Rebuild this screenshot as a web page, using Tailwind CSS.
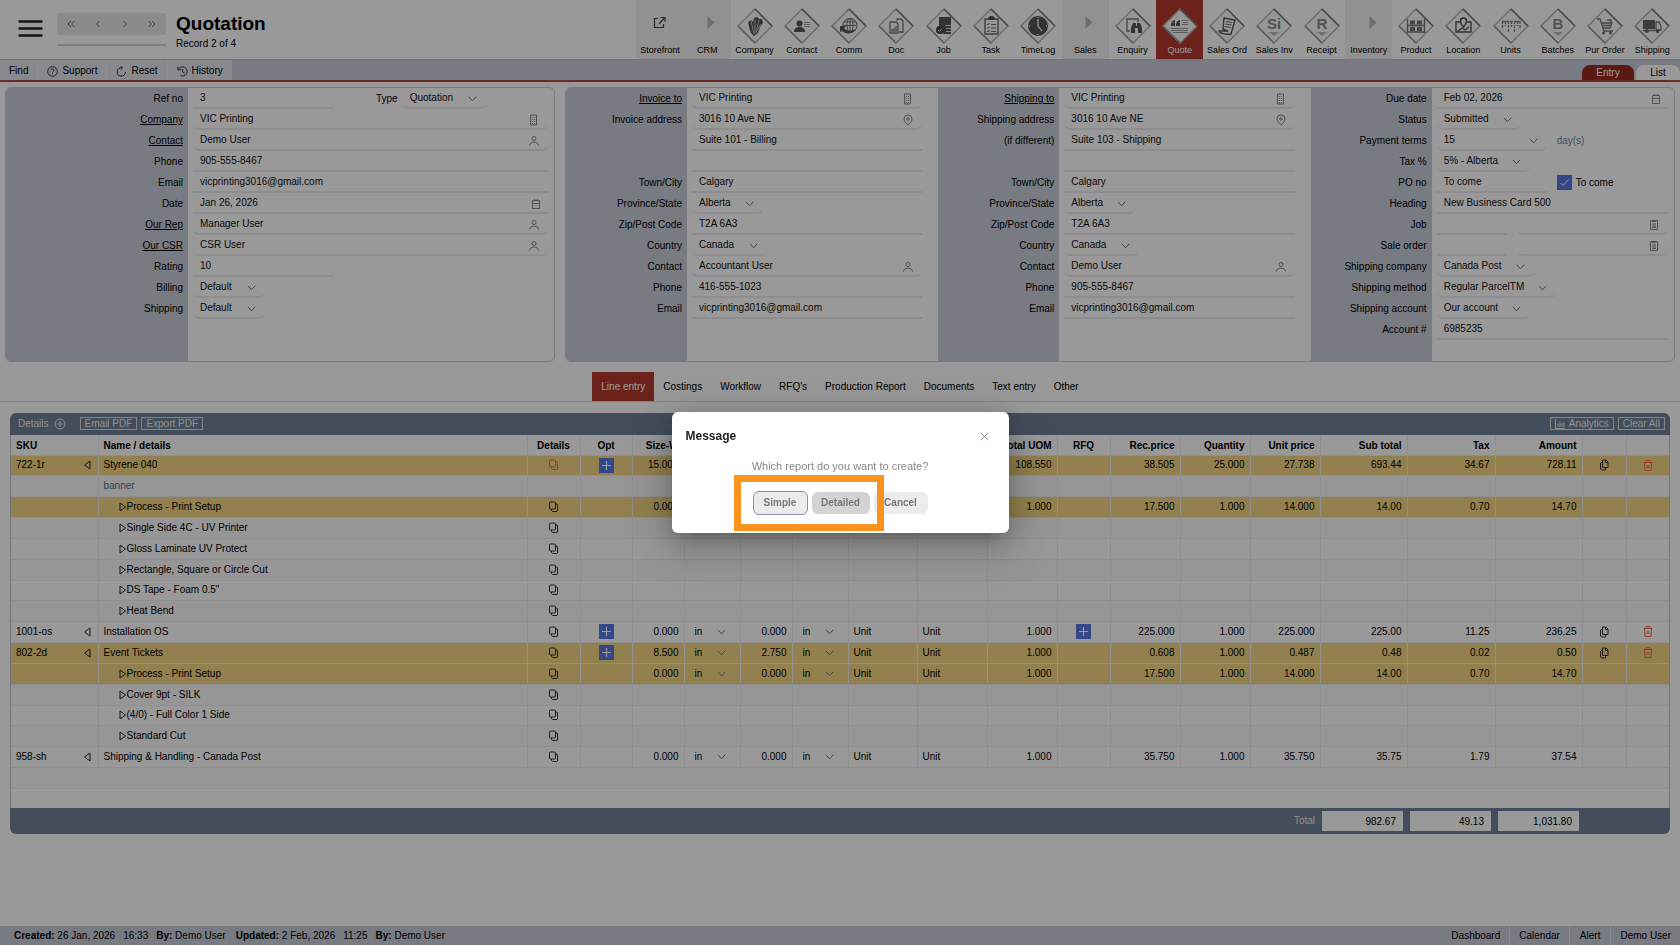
<!DOCTYPE html>
<html lang="en">
<head>
    <meta charset="UTF-8">
    <meta name="viewport" content="width=device-width, initial-scale=1.0">
    <title>Quotation</title>
    <script src="https://cdn.jsdelivr.net/npm/@tailwindcss/browser@4"></script>
</head>
<body class="min-h-screen flex flex-col bg-white text-[10px] leading-3 text-black font-['Liberation_Sans',Arial,sans-serif]">

    <!-- Header -->
    <header class="flex h-[60px] border-b border-[#c4c4c4]">
        <button aria-label="Menu" class="ml-[18px] mt-4 self-start">
            <svg width="25" height="25" viewBox="0 0 25 25" stroke="#222" stroke-width="2.4" stroke-linecap="round"><path d="M1.5 5.5h22M1.5 12.5h22M1.5 19.5h22"/></svg>
        </button>
        <div class="ml-3.5 mt-[13px] w-[109px]">
            <div class="flex h-[22px] items-center justify-around rounded bg-[#e6e6e6] text-[#666]">
                <button aria-label="First"><svg width="8" height="8" viewBox="0 0 8 8" fill="none" stroke="currentColor"><path d="M4 1L1 4l3 3M7.5 1l-3 3 3 3"/></svg></button>
                <button aria-label="Previous"><svg width="8" height="8" viewBox="0 0 8 8" fill="none" stroke="currentColor"><path d="M5.5 1l-3 3 3 3"/></svg></button>
                <button aria-label="Next"><svg width="8" height="8" viewBox="0 0 8 8" fill="none" stroke="currentColor"><path d="M2.5 1l3 3-3 3"/></svg></button>
                <button aria-label="Last"><svg width="8" height="8" viewBox="0 0 8 8" fill="none" stroke="currentColor"><path d="M.5 1l3 3-3 3M4 1l3 3-3 3"/></svg></button>
            </div>
            <div class="mt-[9px] h-0.5 bg-[#d0d4df]"></div>
        </div>
        <div class="ml-2.5 mt-3">
            <h1 class="text-[19px] leading-6 font-bold">Quotation</h1>
            <p class="mt-0.5">Record 2 of 4</p>
        </div>
        <nav id="modules" class="ml-auto mr-1 flex w-[62%] pl-0.5 text-[9px]"></nav>
    </header>

    <!-- Toolbar -->
    <div class="flex h-[22px] border-b-2 border-[#b04a3a] bg-[#c8cdd9]">
        <button class="flex items-center border-r border-[#eceef2] bg-[#e2e5ea] px-[9px] pt-0.5">Find</button>
        <button class="flex items-center gap-1 border-r border-[#eceef2] bg-[#e2e5ea] px-[9px] pt-0.5">
            <svg width="11" height="11" viewBox="0 0 11 11" fill="none" stroke="#333"><circle cx="5.5" cy="5.5" r="4.8"/><path d="M4 4.4c0-2 3-2 3 0 0 1-1.500 1-1.500 2.200M5.500 7.500v1"/></svg>
            Support
        </button>
        <button class="flex items-center gap-1 border-r border-[#eceef2] bg-[#e2e5ea] px-[9px] pt-0.5">
            <svg width="11" height="11" viewBox="0 0 11 11" fill="none" stroke="#333"><path d="M9.500 6a4.200 4.200 0 1 1-3.500-4.200M4.500.3L6.500 2 4.600 3.800"/></svg>
            Reset
        </button>
        <button class="flex items-center gap-1 bg-[#e2e5ea] px-[9px] pt-0.5">
            <svg width="11" height="11" viewBox="0 0 11 11" fill="none" stroke="#333"><path d="M1.500 3.200a4.600 4.600 0 1 1 1.800 6.200M.8.800v3h3M5.700 3v3l2 1.200"/></svg>
            History
        </button>
        <div class="ml-auto flex items-end gap-0.5">
            <button class="h-[15px] w-[52px] rounded-t-lg bg-[#9a2a1d] text-white">Entry</button>
            <button class="h-[15px] w-11 rounded-t-lg bg-white">List</button>
        </div>
    </div>

    <main class="grow">
        <!-- Form panels -->
        <form class="flex gap-2.5 px-[5px] pt-[5px]">
            <div class="flex flex-[549_1_0%] overflow-hidden rounded-md border border-[#c8cdd9]" data-section="customer" data-wide></div>
            <div class="flex flex-[1110_1_0%] overflow-hidden rounded-md border border-[#c8cdd9]">
                <div class="flex flex-[373_1_0%]" data-section="invoice"></div>
                <div class="flex flex-[373_1_0%]" data-section="shipping"></div>
                <div class="flex flex-[364_1_0%]" data-section="terms" data-last></div>
            </div>
        </form>

        <!-- Tabs -->
        <nav class="mt-2.5 flex h-[30px] justify-center border-b border-[#dcdcdc]">
            <a href="#" class="flex items-center bg-[#b43a2d] px-[9px] text-white">Line entry</a>
            <a href="#" class="flex items-center px-[9px]">Costings</a>
            <a href="#" class="flex items-center px-[9px]">Workflow</a>
            <a href="#" class="flex items-center px-[9px]">RFQ's</a>
            <a href="#" class="flex items-center px-[9px]">Production Report</a>
            <a href="#" class="flex items-center px-[9px]">Documents</a>
            <a href="#" class="flex items-center px-[9px]">Text entry</a>
            <a href="#" class="flex items-center px-[9px]">Other</a>
        </nav>

        <!-- Line items -->
        <section class="mx-2.5 mt-[11px] overflow-hidden rounded-md bg-[#708099]">
            <div class="flex h-[22px] items-center pr-[5px] pb-px pl-2 text-[#eee]">
                <span>Details</span>
                <button aria-label="Add line" class="ml-[5px]"><svg width="12" height="12" viewBox="0 0 12 12" fill="none" stroke="currentColor"><circle cx="6" cy="6" r="5"/><path d="M6 3v6M3 6h6"/></svg></button>
                <button class="ml-3.5 h-[13px] border border-[#ddd] px-1 leading-[11px]">Email PDF</button>
                <button class="ml-1 h-[13px] border border-[#ddd] px-1 leading-[11px]">Export PDF</button>
                <button class="ml-auto flex h-[13px] items-center gap-1 border border-[#ddd] px-1 leading-[11px]">
                    <svg width="10" height="10" viewBox="0 0 10 10" fill="none" stroke="currentColor"><path d="M.5 0v9.500H10M3 8V5M5 8V2.500M7 8V4M9 8V3"/></svg>
                    Analytics
                </button>
                <button class="ml-1 h-[13px] border border-[#ddd] px-1 leading-[11px]">Clear All</button>
            </div>
            <div class="border-x border-[#c4c4c8] bg-white">
                <table class="w-full table-fixed border-collapse">
                    <colgroup>
                        <col class="w-[87px]"><col><col class="w-[53px]"><col class="w-[52px]"><col class="w-[52px]">
                        <col class="w-[56px]"><col class="w-[52px]"><col class="w-[56px]"><col class="w-[69px]"><col class="w-[70px]">
                        <col class="w-[70px]"><col class="w-[53px]"><col class="w-[70px]"><col class="w-[70px]"><col class="w-[70px]">
                        <col class="w-[87px]"><col class="w-[88px]"><col class="w-[87px]"><col class="w-[44px]"><col class="w-[43px]">
                    </colgroup>
                    <thead><tr id="heads" class="h-5"></tr></thead>
                    <tbody id="lines"></tbody>
                </table>
            </div>
            <div class="flex h-[26px] items-center justify-end gap-[7px] pr-[91px] text-[#eee]">
                <span>Total</span>
                <input aria-label="Sub total" readonly value="982.67" class="h-5 w-[81px] bg-white pr-[7px] text-right text-black">
                <input aria-label="Tax total" readonly value="49.13" class="h-5 w-[81px] bg-white pr-[7px] text-right text-black">
                <input aria-label="Amount total" readonly value="1,031.80" class="h-5 w-[81px] bg-white pr-[7px] text-right text-black">
            </div>
        </section>
    </main>

    <!-- Status bar -->
    <footer class="flex h-[19px] items-center bg-[#c8cdd9] pl-3.5">
        <span><b>Created:</b> 26 Jan, 2026</span>
        <span class="ml-2">16:33</span>
        <span class="ml-2"><b>By:</b> Demo User</span>
        <span class="ml-2.5"><b>Updated:</b> 2 Feb, 2026</span>
        <span class="ml-2">11:25</span>
        <span class="ml-2"><b>By:</b> Demo User</span>
        <nav class="ml-auto flex h-full">
            <a href="#" class="flex items-center border-r border-[#e4e7ee] px-[9px]">Dashboard</a>
            <a href="#" class="flex items-center border-r border-[#e4e7ee] px-[9px]">Calendar</a>
            <a href="#" class="flex items-center border-r border-[#e4e7ee] px-2.5">Alert</a>
            <a href="#" class="flex items-center px-[9px]">Demo User</a>
        </nav>
    </footer>

    <!-- Message dialog -->
    <div class="fixed inset-0 flex items-center justify-center bg-black/40">
        <div role="dialog" aria-labelledby="dialogTitle" class="w-[337px] rounded-md bg-white px-3.5 pt-4 pb-[18px] shadow-[0_12px_48px_16px_rgba(0,0,0,0.12),0_9px_28px_rgba(0,0,0,0.2),0_6px_16px_-8px_rgba(0,0,0,0.3)]">
            <div class="flex h-4 items-center justify-between">
                <h2 id="dialogTitle" class="text-xs font-bold text-[#222]">Message</h2>
                <button aria-label="Close" class="mr-1.5"><svg width="9" height="9" viewBox="0 0 9 9" stroke="#888"><path d="M.8.8l7.400 7.400M8.200.8L.8 8.200"/></svg></button>
            </div>
            <p class="mt-3.5 text-center text-[11px] leading-4 text-[#888]">Which report do you want to create?</p>
            <div class="relative mt-[17px] flex h-6 items-center justify-center gap-1 font-bold text-[#777]">
                <button class="h-6 w-[55px] rounded-md border border-[#8792a6] bg-[#ebebeb]">Simple</button>
                <button class="h-[22px] w-[58px] rounded-md bg-[#d3d3d3]">Detailed</button>
                <button class="h-[22px] w-[54px] rounded-md bg-[#ececec]">Cancel</button>
                <div class="pointer-events-none absolute -top-4 left-12 h-14 w-[150px] border-[7px] border-[#f8941d]"></div>
            </div>
        </div>
    </div>

    <script>
        const modules = [
            ['Storefront', 'link'], ['CRM', 'group'],
            ['Company', '<path fill="#555" d="M11 14l3-2 2 2 1-4 3-1 2 2 3 0 1 4-3 4-2 6-4 3-3-3-2-6z"/><path stroke="#ddd" stroke-width=".8" fill="none" d="M14 13l3 13M18 12v14M22 12l-3 13M24 16l-5 8"/>'],
            ['Contact', '<circle cx="15.5" cy="15.5" r="3" fill="#555"/><path fill="#555" d="M10 24c0-4 3-5 5.500-5s5.500 1 5.500 5z"/><path stroke="#999" d="M20 14.500h6M20 16.500h6M20 18.500h6"/>'],
            ['Comm', '<g fill="none" stroke="#777" stroke-width="1.1"><circle cx="19" cy="17.5" r="7"/><ellipse cx="19" cy="17.5" rx="3" ry="7"/><path d="M12.500 17.500h13M13.500 14h11M19 11v13"/></g><path fill="#555" d="M9 18h6l-2 2c3 4 8 3 12 1-3 5-10 6-14 2l-2 1z"/>'],
            ['Doc', '<path fill="none" stroke="#777" stroke-width="1.3" d="M12 14h6l2 2v9h-8zM19 13v-2h4l2 2v11h-4"/><path stroke="#777" stroke-width="1.3" d="M14 24v-3M16 24v-4M18 24v-6"/>'],
            ['Job', '<path fill="#555" d="M13 9h12v17h-8a5 5 0 0 0-4-7z"/><circle cx="14" cy="22" r="4" fill="#444"/><path fill="none" stroke="#ddd" d="M19 17.500h6M20 20.500h5M20 23.500h5M12 22l1.500 1.500 2.500-3"/>'],
            ['Task', '<path fill="none" stroke="#666" stroke-width="1.4" d="M12 11h13v15H12z"/><path fill="#555" d="M15 10l2-2h3l2 2v2h-7z"/><path fill="none" stroke="#666" d="M14 16l1 1 1.500-2M14 19.500l1 1 1.500-2M14 23l1 1 1.500-2M18 16.500h5M18 20h5M18 23.500h5"/>'],
            ['TimeLog', '<circle cx="18" cy="18" r="10" fill="#555"/><path fill="none" stroke="#ddd" stroke-width="1.5" d="M18 11v7l4 5M18 9v1M27 18h-1M9 18h1M18 27v-1"/>'],
            ['Sales', 'group'],
            ['Enquiry', '<path fill="none" stroke="#777" stroke-width="1.4" d="M15 23h-3V11h11v3"/><path fill="#555" d="M16 25v-5l2-5h3v3h1v-3h3l2 5v5h-4v-5h-3v5z"/>'],
            ['Quote', '<path fill="#555" d="M9 17q0-4 4-5v2l-1 1h1v3H9zM14 17q0-4 4-5v2l-1 1h1v3h-4z"/><path stroke="#999" d="M20 12.500h6M21 14.500h5M20 16.500h6M9 20.500h17M9 22.500h17M11 24.500h15"/>', 'active'],
            ['Sales Ord', '<path fill="none" stroke="#555" stroke-width="1.4" d="M15 10l11 2-4 14c-5 1-12-1-12-3h9l-3-1-2-1z"/><path stroke="#666" d="M17 13.500l6 1M16.500 16l6 1M15.500 18.500l6 1"/>'],
            ['Sales Inv', 'Si'], ['Receipt', 'R'],
            ['Inventory', 'group'],
            ['Product', '<path stroke="#777" stroke-width="1.4" d="M9.500 11v14M26.500 11v14M10 17.500h16M10 24h16"/><path fill="#777" d="M12 12.500h5v4h-5zM19 12.500h5v4h-5zM12 19h5v4h-5zM19 19h5v4h-5z"/>'],
            ['Location', '<path fill="none" stroke="#555" stroke-width="1.4" d="M15 14h-4v10h15V14h-4M13 23l4-3 3 2 4-3"/><path fill="#fafafa" stroke="#444" stroke-width="1.4" d="M18.500 19c-2-2-3-4-3-6a3 3 0 0 1 6 0c0 2-1 4-3 6z"/>'],
            ['Units', '<path fill="none" stroke="#888" stroke-width="1.3" stroke-dasharray="3 1" d="M9 13.500h18M9.500 13v7M12.500 13v5M15.500 13v12M18.500 13v6M21.500 13v12M24.500 13v5M27 13v7"/>'],
            ['Batches', 'B'],
            ['Pur Order', '<path fill="none" stroke="#777" stroke-width="1.3" d="M10 11h3l4 12h9M14 15h11l-2 5h-7M16 17.500h8M20 12h4v3"/><circle cx="16.5" cy="25" r="1.4" fill="#666"/><circle cx="23.5" cy="25" r="1.4" fill="#666"/>'],
            ['Shipping', '<path fill="#666" d="M9 12h12v9H9z"/><path fill="none" stroke="#777" stroke-width="1.3" d="M22 14h3l2 4v4h-5zM9 22.500h12"/><circle cx="13" cy="23" r="2" fill="#666"/><circle cx="23.5" cy="23" r="2" fill="#666"/>'],
        ];

        function moduleIcon(art) {
            if (art === 'link') return '<svg width="36" height="36" viewBox="0 0 36 36" fill="none" stroke="#444" stroke-width="1.2"><path d="M16 10.500h-3.500v9h9V16M17 16l5-5.500M18.500 9.500H23V14"/></svg>';
            if (art === 'group') return '<svg width="36" height="36" viewBox="0 0 36 36"><path d="M18.500 8v13l7-6.500z" fill="#b8b8b8"/></svg>';
            if (art.length < 3) art = `<text x="18" y="21" text-anchor="middle" font-size="15" font-weight="bold" fill="#888">${art}</text><path fill="#bbb" d="M13 24h10l-5 4z"/>`;
            return `<svg width="36" height="36" viewBox="0 0 36 36"><path d="M18 1l17 17-17 17L1 18z" fill="#fafafa" stroke="#b4b4b4" stroke-width="1.5"/><path d="M18 1l17 17" stroke="#777" stroke-width="1.5"/><path d="M1 18l17 17" stroke="#999" stroke-width="1.5"/>${art}</svg>`;
        }

        document.getElementById('modules').innerHTML = modules.map(([name, art, active]) => {
            const tone = active ? 'bg-[#b43a2d] text-white' : art === 'group' || art === 'link' ? 'bg-[#f2f2f2]' : '';
            return `<a href="#" class="flex flex-1 flex-col items-center pt-2 whitespace-nowrap ${tone}">${moduleIcon(art)}<span>${name}</span></a>`;
        }).join('');

        const icons = {
            building: '<path d="M2.500 1h6v10h-6zM4.500 3v1M6.500 3v1M4.500 5v1M6.500 5v1M4.500 7v1M6.500 7v1M4.500 9v1M6.500 9v1"/>',
            person: '<circle cx="6" cy="3.5" r="2"/><path d="M1.500 10.500c0-4.500 9-4.500 9 0"/>',
            date: '<path d="M2.500 2.500h7v8h-7zM2.500 5.500h7M4.500 1v2M7.500 1v2"/>',
            pin: '<path d="M6 11C3 8.300 2 7 2 5a4 4 0 0 1 8 0c0 2-1 3.300-4 6z"/><circle cx="6" cy="5" r="1.2"/>',
            clipboard: '<path d="M2.500 1.500h7v9h-7zM4.500 1v1.500h3V1M4 5h4M4 7h4M4 8.500h4"/>',
        };
        const chevron = (cls) => `<svg class="pointer-events-none absolute ${cls} text-[#777]" width="9" height="6" viewBox="0 0 9 6" fill="none" stroke="currentColor"><path d="M.8.8L4.500 4.800 8.200.8"/></svg>`;

        // field types: text (default), select, or text with a lookup icon
        const sections = {
            customer: [
                ['Ref no', [{ v: '3', w: 'w-[140px]' }, { label: 'Type', v: 'Quotation', select: true, w: 'w-[83px]' }]],
                ['Company', [{ v: 'VIC Printing', icon: 'building' }], 'link'],
                ['Contact', [{ v: 'Demo User', icon: 'person' }], 'link'],
                ['Phone', [{ v: '905-555-8467' }]],
                ['Email', [{ v: 'vicprinting3016@gmail.com' }]],
                ['Date', [{ v: 'Jan 26, 2026', icon: 'date' }]],
                ['Our Rep', [{ v: 'Manager User', icon: 'person' }], 'link'],
                ['Our CSR', [{ v: 'CSR User', icon: 'person' }], 'link'],
                ['Rating', [{ v: '10', w: 'w-[140px]' }]],
                ['Billing', [{ v: 'Default', select: true, w: 'w-[72px]' }]],
                ['Shipping', [{ v: 'Default', select: true, w: 'w-[72px]' }]],
            ],
            invoice: [
                ['Invoice to', [{ v: 'VIC Printing', icon: 'building' }], 'link'],
                ['Invoice address', [{ v: '3016 10 Ave NE', icon: 'pin' }]],
                ['', [{ v: 'Suite 101 - Billing' }]],
                ['', [{ v: '' }]],
                ['Town/City', [{ v: 'Calgary' }]],
                ['Province/State', [{ v: 'Alberta', select: true, w: 'w-[71px]' }]],
                ['Zip/Post Code', [{ v: 'T2A 6A3' }]],
                ['Country', [{ v: 'Canada', select: true, w: 'w-[75px]' }]],
                ['Contact', [{ v: 'Accountant User', icon: 'person' }]],
                ['Phone', [{ v: '416-555-1023' }]],
                ['Email', [{ v: 'vicprinting3016@gmail.com' }]],
            ],
            shipping: [
                ['Shipping to', [{ v: 'VIC Printing', icon: 'building' }], 'link'],
                ['Shipping address', [{ v: '3016 10 Ave NE', icon: 'pin' }]],
                ['(if different)', [{ v: 'Suite 103 - Shipping' }]],
                ['', [{ v: '' }]],
                ['Town/City', [{ v: 'Calgary' }]],
                ['Province/State', [{ v: 'Alberta', select: true, w: 'w-[71px]' }]],
                ['Zip/Post Code', [{ v: 'T2A 6A3' }]],
                ['Country', [{ v: 'Canada', select: true, w: 'w-[75px]' }]],
                ['Contact', [{ v: 'Demo User', icon: 'person' }]],
                ['Phone', [{ v: '905-555-8467' }]],
                ['Email', [{ v: 'vicprinting3016@gmail.com' }]],
            ],
            terms: [
                ['Due date', [{ v: 'Feb 02, 2026', icon: 'date' }]],
                ['Status', [{ v: 'Submitted', select: true, w: 'w-[84px]' }]],
                ['Payment terms', [{ v: '15', select: true, w: 'w-[110px]' }, { note: 'day(s)' }]],
                ['Tax %', [{ v: '5% - Alberta', select: true, w: 'w-[93px]' }]],
                ['PO no', [{ v: 'To come', w: 'w-[110px]' }, { check: 'To come' }]],
                ['Heading', [{ v: 'New Business Card 500' }]],
                ['Job', [{ v: '', w: 'w-[70px]' }, { v: '', icon: 'clipboard', gap: true }]],
                ['Sale order', [{ v: '', w: 'w-[70px]' }, { v: '', icon: 'clipboard', gap: true }]],
                ['Shipping company', [{ v: 'Canada Post', select: true, w: 'w-[97px]' }]],
                ['Shipping method', [{ v: 'Regular ParcelTM', select: true, w: 'w-[119px]' }]],
                ['Shipping account', [{ v: 'Our account', select: true, w: 'w-[93px]' }]],
                ['Account #', [{ v: '6985235' }]],
            ],
        };

        function fieldHtml(f, id) {
            if (f.note) return `<span class="ml-2.5 text-[#7485b0]">${f.note}</span>`;
            if (f.check) return `<input type="checkbox" checked id="${id}" class="ml-2.5 size-[15px] appearance-none bg-[#5777e0]">
                <svg class="pointer-events-none -ml-3 size-[9px]" viewBox="0 0 9 9" fill="none" stroke="#fff"><path d="M.5 5l2.500 2.500L8.500 1.500"/></svg>
                <label for="${id}" class="ml-[7px]">${f.check}</label>`;
            const pre = f.label ? `<label for="${id}" class="ml-[43px] mr-[5px]">${f.label}</label>` : '';
            if (f.select) return `${pre}<span class="relative flex h-full items-center ${f.w}">
                <select id="${id}" class="h-full w-full appearance-none rounded-b-md border-b-2 border-[#ececf0] pl-[7px] text-[#111]"><option>${f.v}</option></select>${chevron('right-[9px]')}</span>`;
            const name = f.gap ? 'aria-label="Description"' : '';
            const round = f.icon && f.icon !== 'date' ? 'rounded-b-md' : '';
            const icon = f.icon ? `<svg class="absolute ${f.icon === 'date' ? 'right-1.5' : 'right-2'} text-[#888]" width="12" height="12" viewBox="0 0 12 12" fill="none" stroke="currentColor">${icons[f.icon]}</svg>` : '';
            return `<span class="relative flex h-full items-center ${f.w || 'grow'} ${f.gap ? 'ml-2.5' : ''}">
                <input type="text" id="${id}" ${name} value="${f.v}" class="h-full w-full border-b-2 border-[#ececf0] pl-[7px] text-[#111] ${round}">${icon}</span>`;
        }

        document.querySelectorAll('[data-section]').forEach((box) => {
            const key = box.dataset.section;
            const rows = sections[key];
            const wide = 'wide' in box.dataset;
            const pad = wide || 'last' in box.dataset ? 'pr-1.5' : 'pr-4';
            box.innerHTML = `
                <div class="${wide ? 'w-[182px]' : 'w-[121px]'} h-[273px] shrink-0 bg-[#c8cdd9] pr-[5px] text-right">
                    ${rows.map(([label, , link], r) => `<label for="${key}${r}_0" class="block h-[21px] leading-[22px] ${link ? 'underline' : ''}">${label}</label>`).join('')}
                </div>
                <div class="min-w-0 grow pl-[5px] ${pad}">
                    ${rows.map(([, fields], r) => `<div class="flex h-[21px] items-center">${fields.map((f, i) => fieldHtml(f, `${key}${r}_${i}`)).join('')}</div>`).join('')}
                </div>`;
        });

        const heads = ['SKU', 'Name / details', 'Details', 'Opt', 'Size-W', '', '', '', '', '', 'Total UOM', 'RFQ', 'Rec.price', 'Quantity', 'Unit price', 'Sub total', 'Tax', 'Amount', '', ''];
        const align = (i) => i < 2 || i === 8 || i === 9 ? 'text-left' : [2, 3, 11, 18, 19].includes(i) ? 'text-center' : 'text-right';
        document.getElementById('heads').innerHTML = heads.map((h, i) =>
            `<th class="border-r border-[#eee] px-[5px] pt-0.5 font-bold whitespace-nowrap last:border-r-0 ${align(i)}">${h}</th>`).join('');

        // rows with a sku are items, rows with a child name are their processes
        const lines = [
            { sku: '722-1r', name: 'Styrene 040', hot: true, red: true, opt: true, size: ['15.000', ''], total: '108.550', sums: ['38.505', '25.000', '27.738', '693.44', '34.67', '728.11'] },
            { note: 'banner' },
            { child: 'Process - Print Setup', hot: true, size: ['0.000', ''], total: '1.000', sums: ['17.500', '1.000', '14.000', '14.00', '0.70', '14.70'] },
            { child: 'Single Side 4C - UV Printer' },
            { child: 'Gloss Laminate UV Protect' },
            { child: 'Rectangle, Square or Circle Cut' },
            { child: 'DS Tape - Foam 0.5"' },
            { child: 'Heat Bend' },
            { sku: '1001-os', name: 'Installation OS', opt: true, rfq: true, size: ['0.000', '0.000'], total: '1.000', sums: ['225.000', '1.000', '225.000', '225.00', '11.25', '236.25'] },
            { sku: '802-2d', name: 'Event Tickets', hot: true, opt: true, size: ['8.500', '2.750'], total: '1.000', sums: ['0.608', '1.000', '0.487', '0.48', '0.02', '0.50'] },
            { child: 'Process - Print Setup', hot: true, size: ['0.000', '0.000'], total: '1.000', sums: ['17.500', '1.000', '14.000', '14.00', '0.70', '14.70'] },
            { child: 'Cover 9pt - SILK' },
            { child: '(4/0) - Full Color 1 Side' },
            { child: 'Standard Cut' },
            { sku: '958-sh', name: 'Shipping &amp; Handling - Canada Post', locked: true, size: ['0.000', '0.000'], total: '1.000', sums: ['35.750', '1.000', '35.750', '35.75', '1.79', '37.54'] },
        ];

        const plus = '<button aria-label="Add" class="mx-auto flex size-[15px] items-center justify-center bg-[#5777e0]"><svg width="11" height="11" viewBox="0 0 11 11" stroke="#fff" stroke-width="1.2"><path d="M5.500 1v9M1 5.500h9"/></svg></button>';
        const unit = `<span class="relative flex items-center"><select aria-label="Unit" class="w-full appearance-none pl-[5px]"><option>in</option></select>${chevron('right-[9px]')}</span>`;
        const layers = (red) => `<button aria-label="Details" class="block mx-auto ${red ? 'text-[#ff6a50]' : 'text-[#333]'}"><svg width="11" height="12" viewBox="0 0 11 12" fill="none" stroke="currentColor"><rect x="1.5" y="1" width="6" height="7" rx="1"/><path d="M3.500 8v1.500l1 1H9l.5-.5V4L9 3H7.500"/></svg></button>`;
        const copy = '<button aria-label="Copy" class="block mx-auto"><svg width="10" height="12" viewBox="0 0 10 12" fill="none" stroke="#333"><path d="M3.500 1H7l2 2v5.500H3.500zM3.500 3L1.500 4v6l1 1h4V8.500M6.500 1v2.500H9"/></svg></button>';
        const trash = '<button aria-label="Delete" class="block mx-auto"><svg width="10" height="11" viewBox="0 0 10 11" fill="none" stroke="#ff6a50"><path d="M.5 2.500h9M3 2.500v-2h4v2M1.500 2.500l.5 8h6l.5-8M4 5v3M6 5v3"/></svg></button>';
        const left = '<svg class="ml-auto mr-0.5" width="8" height="10" viewBox="0 0 8 10" fill="none" stroke="#222"><path d="M7 1v8L1.500 5z"/></svg>';
        const right = '<svg width="8" height="10" viewBox="0 0 8 10" fill="none" stroke="#222"><path d="M1 1v8l5.500-4z"/></svg>';

        const body = lines.map((l) => {
            const main = l.size;
            const cells = [
                l.sku ? `<span class="flex items-center">${l.sku}${left}</span>` : '',
                l.child ? `<span class="ml-[15px] flex items-center">${right}${l.child}</span>` : l.note ? `<span class="text-[#4f6f90]">${l.note}</span>` : l.name,
                l.note ? '' : layers(l.red),
                l.opt ? plus : '',
                main ? l.size[0] : '', main && l.size[1] ? unit : '',
                main ? l.size[1] : '', main && l.size[1] ? unit : '',
                main && l.size[1] ? 'Unit' : '', main && l.size[1] ? 'Unit' : '',
                l.total || '',
                l.rfq ? plus : '',
                ...(l.sums || ['', '', '', '', '', '']),
                l.sku && !l.locked ? copy : '', l.sku && !l.locked ? trash : '',
            ];
            return `<tr class="h-[21px] nth-[6n+1]:h-5 ${l.hot ? 'bg-[#f3d582]' : 'even:bg-[#fafafa]'}">${cells.map((c, i) =>
                `<td class="border border-[#eee] px-[5px] py-0 whitespace-nowrap first:border-l-0 last:border-r-0 ${align(i)}">${c}</td>`).join('')}</tr>`;
        }).join('');
        document.getElementById('lines').innerHTML = body +
            '<tr class="h-[21px] bg-[#fafafa]"><td colspan="20"></td></tr><tr class="h-5 border-t border-[#eee]"><td colspan="20"></td></tr>';
    </script>
</body>
</html>
